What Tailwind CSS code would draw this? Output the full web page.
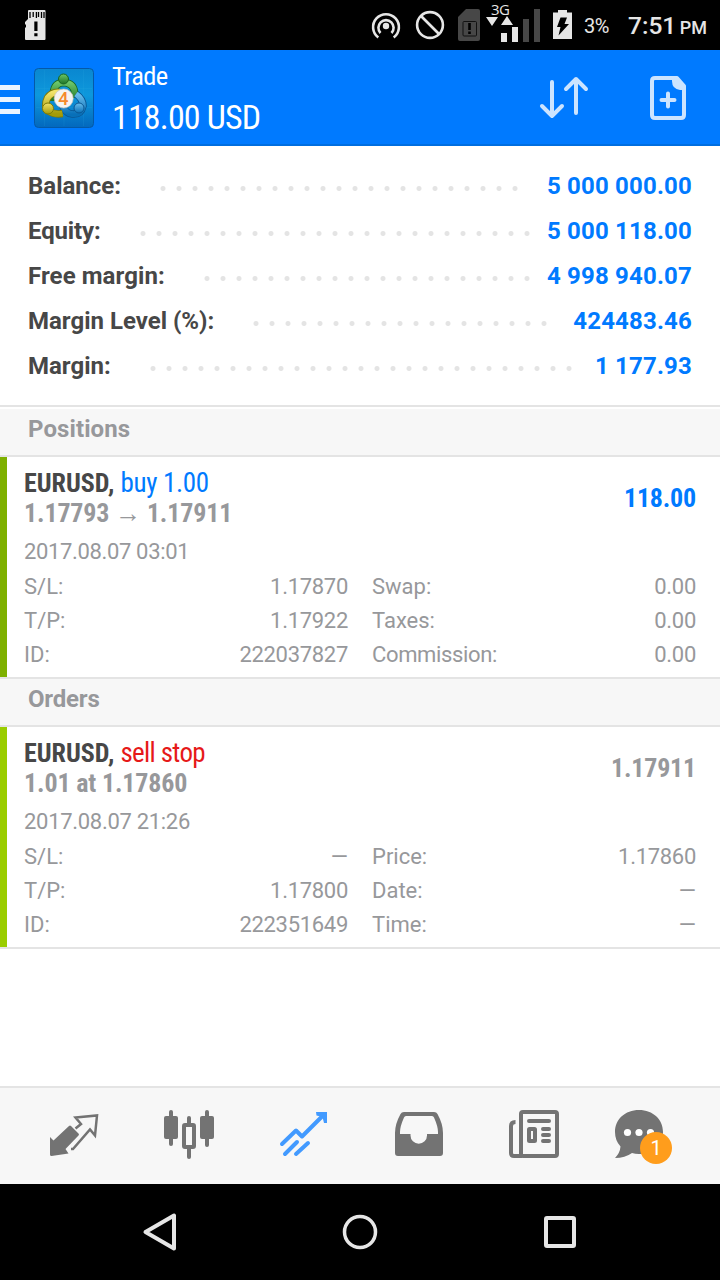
<!DOCTYPE html>
<html lang="en">
<head>
<meta charset="utf-8">
<title>Trade</title>
<script src="https://cdn.jsdelivr.net/npm/@tailwindcss/browser@4"></script>
</head>
<body class="w-[720px] h-[1280px] flex flex-col bg-white font-['Roboto',sans-serif] overflow-hidden">

<!-- Status bar -->
<header class="h-[50px] shrink-0 bg-black flex items-center text-[#e6e6e6] whitespace-nowrap">
  <svg class="w-[60px] h-[50px]" viewBox="0 0 60 50"><path fill="#e6e6e6" d="M29 10h15.500q1 0 1 1v28q0 1-1 1H26q-1 0-1-1V28l1-1v-2l-1-1v-2l3-3v-8q0-1 1-1z"/><path stroke="#000" stroke-width="1.300" d="M30 12v6M33.200 12v5M36.400 12v6M38.500 12v5M41.500 12v6M44 12v6"/><path fill="#000" d="M34.300 21.500h3.200v9.500h-3.200zM34.300 33.300h3.200v3h-3.200z"/></svg>
  <div class="flex-1"></div>
  <svg class="w-[220px] h-[50px]" viewBox="364 0 220 50">
    <g fill="none" stroke="#e6e6e6" stroke-width="2.600"><path d="M378.300 37.500A12.900 12.900 0 1 1 393.700 37.500"/><path d="M380.500 33A7.600 7.600 0 1 1 391.500 33"/><circle cx="430" cy="25" r="12.900"/><path d="M421 16l18 18"/></g>
    <circle cx="386" cy="26" r="3.200" fill="#e6e6e6"/>
    <path fill="#474747" d="M466 9h12q2 0 2 2v28q0 2-2 2h-18q-2 0-2-2V17z"/>
    <rect x="463" y="21.500" width="13.500" height="14.500" rx="1" fill="none" stroke="#111"/><path fill="#000" d="M468.200 23h2.600v7h-2.600zM468.200 31.500h2.600v2.500h-2.600z"/>
    <text x="491" y="14.500" font-size="15" textLength="19" fill="#e6e6e6" font-weight="500" font-family="Open Sans">3G</text>
    <path fill="#e6e6e6" d="M486 17h12l-6 9zM501 25h12l-6-9zM501 33h6v9h-6zM512 27h6v15h-6z"/>
    <path fill="#474747" d="M523 19h6v23h-6zM534 9h6v33h-6z"/>
    <path fill="#e6e6e6" d="M558 10h9v2.500h5v26.500h-19V12.500h5z"/><path fill="#000" d="M560.500 17.500h6.500l-2.500 6.500H569L558.500 35.500l2-8.500H557z"/>
  </svg>
  <span class="w-[44px] text-[20px] leading-[50px] pt-[2px] tracking-[-0.400px]">3%</span>
  <span class="w-[92px] text-[24.500px] leading-[50px] pt-[3px] font-medium">7:51 <span class="text-[18px] -ml-[2.500px] tracking-[-0.100px]">PM</span></span>
</header>

<!-- App bar -->
<div class="h-[96px] shrink-0 bg-[#007aff] border-b-2 border-[#006ee0] flex">
  <svg class="w-[112px] h-[96px]" viewBox="0 50 112 96">
    <defs>
      <linearGradient id="tile" x2="0" y2="1"><stop offset="0" stop-color="#0a87d0"/><stop offset=".45" stop-color="#0d98dc"/><stop offset="1" stop-color="#0368bd"/></linearGradient>
      <linearGradient id="gr" x2="0" y2="1"><stop stop-color="#6cc66a"/><stop offset="1" stop-color="#1d7425"/></linearGradient>
      <linearGradient id="ye" x2="0" y2="1"><stop stop-color="#f1e36a"/><stop offset="1" stop-color="#a49b08"/></linearGradient>
      <linearGradient id="bl" x2="0" y2="1"><stop stop-color="#69bdec"/><stop offset="1" stop-color="#0870b8"/></linearGradient>
    </defs>
    <path fill="#ebf4ff" d="M0 85h20v5H0zM0 97h20v5H0zM0 109h20v5H0z"/>
    <rect x="34.500" y="68.500" width="59" height="59" rx="4" fill="url(#tile)" stroke="#0459a8"/>
    <path stroke="#3ab3ea" stroke-opacity=".12" d="M44.500 70v56M83.500 70v56M36 88.500h56M36 107.500h56M64 70v56"/>
    <g fill="none">
      <path d="M53.500 101V92q1-9 10-9.500 10 .5 11 9.500v6" stroke="#17661f" stroke-width="7.500"/><path d="M53.500 101V92q1-9 10-9.500 10 .5 11 9.500v6" stroke="url(#gr)" stroke-width="5.800"/>
      <path d="M76 94q7 5 7 12-2 9-11 8-6 0-10-9" stroke="#0a5693" stroke-width="7.500"/><path d="M76 94q7 5 7 12-2 9-11 8-6 0-10-9" stroke="url(#bl)" stroke-width="5.800"/>
      <path d="M60 92.500q-8-1-12.500 5.500-4 8 1 13 6 4 14 2.500" stroke="#7e7a08" stroke-width="7.500"/><path d="M60 92.500q-8-1-12.500 5.500-4 8 1 13 6 4 14 2.500" stroke="url(#ye)" stroke-width="5.800"/>
    </g>
    <circle cx="63.500" cy="79" r="5" fill="url(#gr)" stroke="#17661f"/><circle cx="48" cy="108.500" r="5.500" fill="url(#ye)" stroke="#7e7a08"/><circle cx="79" cy="108" r="5" fill="url(#bl)" stroke="#0a5693"/>
    <circle cx="63.700" cy="98.500" r="9.500" fill="#f5f3f1" stroke="#c9c5bd" stroke-width=".7"/>
    <text x="63.300" y="105" text-anchor="middle" font-size="18" font-weight="500" font-family="Roboto" fill="#f58a2c">4</text>
  </svg>
  <div class="flex-1 text-white font-['Roboto_Condensed','Roboto',sans-serif] font-stretch-condensed">
    <div class="pt-[10px] h-[44px] text-[26.500px] leading-[32px] tracking-[-0.600px]">Trade</div>
    <div class="text-[34px] leading-[46px] tracking-[-0.850px]">118.00 USD</div>
  </div>
  <svg class="w-[200px] h-[96px]" viewBox="520 50 200 96" fill="none" stroke="#cce4ff" stroke-width="4" stroke-linecap="round" stroke-linejoin="round">
    <path d="M552 82v34M542 106l10 10 10-10M576 113V79M566 89l10-10 10 10"/>
    <path d="M655 78h22l7 8v29q0 3-3 3h-26q-3 0-3-3V81q0-3 3-3z"/><path fill="#cce4ff" stroke="none" d="M672 78h5l8 8v4h-5q-8-1-8-9z"/><path d="M661.500 100h13M668 93.500v13"/>
  </svg>
</div>

<!-- Account summary -->
<section class="h-[261px] shrink-0 pt-[18px] border-b-2 border-[#e4e4e4] text-[24px] font-bold leading-[45px] text-[#474747] whitespace-nowrap">
  <div class="flex h-[45px] pl-[28px] pr-[28px]"><span class="w-[126.500px]">Balance:</span><i class="w-[368px] h-[45px] mt-[2px] bg-[radial-gradient(circle,#e4e4e4_2px,transparent_3px)] bg-[size:16px_45px]"></i><span class="ml-auto tracking-[0.180px] text-[#007aff]">5 000 000.00</span></div>
  <div class="flex h-[45px] pl-[28px] pr-[28px]"><span class="w-[106.500px] tracking-[-0.150px]">Equity:</span><i class="w-[400px] h-[45px] mt-[2px] bg-[radial-gradient(circle,#e4e4e4_2px,transparent_3px)] bg-[size:16px_45px]"></i><span class="ml-auto tracking-[0.180px] text-[#007aff]">5 000 118.00</span></div>
  <div class="flex h-[45px] pl-[28px] pr-[28px]"><span class="w-[170.500px] tracking-[0.080px]">Free margin:</span><i class="w-[336px] h-[45px] mt-[2px] bg-[radial-gradient(circle,#e4e4e4_2px,transparent_3px)] bg-[size:16px_45px]"></i><span class="ml-auto tracking-[0.180px] text-[#007aff]">4 998 940.07</span></div>
  <div class="flex h-[45px] pl-[28px] pr-[28px]"><span class="w-[219.500px]">Margin Level (%):</span><i class="w-[304px] h-[45px] mt-[2px] bg-[radial-gradient(circle,#e4e4e4_2px,transparent_3px)] bg-[size:16px_45px]"></i><span class="ml-auto tracking-[0.180px] text-[#007aff]">424483.46</span></div>
  <div class="flex h-[45px] pl-[28px] pr-[28px]"><span class="w-[116.500px]">Margin:</span><i class="w-[432px] h-[45px] mt-[2px] bg-[radial-gradient(circle,#e4e4e4_2px,transparent_3px)] bg-[size:16px_45px]"></i><span class="ml-auto tracking-[0.180px] text-[#007aff]">1 177.93</span></div>
</section>

<!-- Positions -->
<h2 class="mt-[2px] h-[48px] shrink-0 bg-[#f7f7f7] border-b-2 border-[#e4e4e4] pl-[28px] text-[24px] leading-[40px] font-bold tracking-[0.100px] text-[#97989b]">Positions</h2>
<article class="h-[222px] shrink-0 border-b-2 border-[#e4e4e4] flex text-[#97989b] whitespace-nowrap">
  <div class="w-[7px] bg-[#7eb000]"></div>
  <div class="flex-1 pt-[11px] pl-[17px] pr-[24px]">
    <div class="flex justify-between items-center font-['Roboto_Condensed','Roboto',sans-serif] font-stretch-condensed font-bold text-[26px] leading-[30px]">
      <div><div><span class="text-[#474747]">EURUSD,</span> <span class="font-normal text-[#007aff] text-[27px] tracking-[-0.300px]">buy 1.00</span></div><div class="tracking-[-0.150px]">1.17793 → 1.17911</div></div>
      <div class="text-[#007aff] tracking-[-0.200px]">118.00</div>
    </div>
    <div class="mt-[7px] mb-[1px] text-[22px] leading-[34px] tracking-[-0.350px]">2017.08.07 03:01</div>
    <div class="grid grid-cols-2 gap-x-[24px] text-[22px] leading-[34px]">
      <div class="flex justify-between"><span>S/L:</span><span class="tracking-[-0.300px]">1.17870</span></div><div class="flex justify-between"><span>Swap:</span><span class="tracking-[-0.300px]">0.00</span></div>
      <div class="flex justify-between"><span>T/P:</span><span class="tracking-[-0.300px]">1.17922</span></div><div class="flex justify-between"><span>Taxes:</span><span class="tracking-[-0.300px]">0.00</span></div>
      <div class="flex justify-between"><span>ID:</span><span class="tracking-[-0.300px]">222037827</span></div><div class="flex justify-between"><span class="tracking-[-0.350px]">Commission:</span><span class="tracking-[-0.300px]">0.00</span></div>
    </div>
  </div>
</article>

<!-- Orders -->
<h2 class="h-[48px] shrink-0 bg-[#f7f7f7] border-b-2 border-[#e4e4e4] pl-[28px] text-[24px] leading-[40px] font-bold tracking-[-0.200px] text-[#97989b]">Orders</h2>
<article class="h-[222px] shrink-0 border-b-2 border-[#e4e4e4] flex text-[#97989b] whitespace-nowrap">
  <div class="w-[7px] bg-[#9acd00]"></div>
  <div class="flex-1 pt-[11px] pl-[17px] pr-[24px]">
    <div class="flex justify-between items-center font-['Roboto_Condensed','Roboto',sans-serif] font-stretch-condensed font-bold text-[26px] leading-[30px]">
      <div><div><span class="text-[#474747]">EURUSD,</span> <span class="font-normal text-[#e61919] text-[27px] tracking-[-0.650px]">sell stop</span></div><div class="tracking-[-0.150px]">1.01 at 1.17860</div></div>
      <div class="tracking-[-0.200px]">1.17911</div>
    </div>
    <div class="mt-[7px] mb-[1px] text-[22px] leading-[34px] tracking-[-0.300px]">2017.08.07 21:26</div>
    <div class="grid grid-cols-2 gap-x-[24px] text-[22px] leading-[34px]">
      <div class="flex justify-between"><span>S/L:</span><span>—</span></div><div class="flex justify-between"><span>Price:</span><span class="tracking-[-0.300px]">1.17860</span></div>
      <div class="flex justify-between"><span>T/P:</span><span class="tracking-[-0.300px]">1.17800</span></div><div class="flex justify-between"><span>Date:</span><span>—</span></div>
      <div class="flex justify-between"><span>ID:</span><span class="tracking-[-0.300px]">222351649</span></div><div class="flex justify-between"><span>Time:</span><span>—</span></div>
    </div>
  </div>
</article>
<div class="flex-1"></div>

<!-- Tab bar -->
<nav class="h-[98px] shrink-0 bg-[#f7f7f7] border-t-2 border-[#e4e4e4] flex pl-[16px]">
  <svg class="w-[115px] h-[96px]" viewBox="16 1088 115 96">
    <path fill="#737373" d="M50 1137l3.500 3.500L69 1126q1-1 2 0l7.500 7.500q1 1 0 2L65.500 1149l3 4.500-17 2.500q-1.500 0-1.500-1.500z"/>
    <path fill="none" stroke="#737373" stroke-width="2.500" stroke-linejoin="miter" d="M75.500 1128.500l5.500-4.500-5.500-6.500 21.500-2-2 20-5-6-17 19.500h-2"/>
  </svg>
  <svg class="w-[115px] h-[96px]" viewBox="131 1088 115 96"><g fill="#737373"><rect x="164" y="1116" width="14" height="23" rx="2"/><rect x="169" y="1110" width="4" height="36" rx="2"/><rect x="200" y="1116" width="14" height="23" rx="2"/><rect x="205" y="1110" width="4" height="37" rx="2"/><rect x="187" y="1116" width="4" height="9" rx="2"/><rect x="187" y="1145" width="4" height="14" rx="2"/></g><rect x="184" y="1125" width="10" height="22" rx="1" fill="none" stroke="#737373" stroke-width="4"/></svg>
  <svg class="w-[115px] h-[96px]" viewBox="246 1088 115 96" fill="none" stroke="#429aff" stroke-width="4" stroke-linecap="round" stroke-linejoin="round"><path d="M282 1144l14-13.500 6 6 22-22M285 1154l12-12M296 1154l12-11"/><path d="M316 1112h11v11h-3l-1.500-6-6-1.500z" fill="#429aff" stroke="none"/></svg>
  <svg class="w-[115px] h-[96px]" viewBox="361 1088 115 96"><path fill="#737373" fill-rule="evenodd" d="M404 1112h30q2.500 0 3.500 2 5.500 10 5.500 19v20q0 3-3 3h-42q-3 0-3-3v-20q0-9 5.500-19 1-2 3.500-2zM406 1116q-1.500 0-2 1.500-4 9-4 14.500v2h10.500v1.500a8.200 8.200 0 0 0 16.500 0v-1.500h11v-2q0-5.500-4-14.500-.5-1.500-2-1.500z"/></svg>
  <svg class="w-[115px] h-[96px]" viewBox="476 1088 115 96" fill="none" stroke="#737373" stroke-width="4"><rect x="521" y="1112" width="36" height="44" rx="2"/><path d="M515.500 1122q-4.500 0-4.500 4v27q0 3 3 3h8"/><path stroke-linecap="round" d="M529 1121h20M543 1129h6M543 1135h6M543 1141h6"/><rect x="529" y="1129" width="6" height="12" rx=".5"/></svg>
  <div class="relative w-[115px] h-[96px]">
    <svg class="w-[115px] h-[96px]" viewBox="591 1088 115 96"><path fill="#737373" d="M639 1110c14 0 24 9.500 24 22s-10 22-24 22q-4 0-7-1-7 5-17 5 5-5 5.500-11.500-5.500-6-5.500-14.500c0-12.500 10-22 24-22z"/><g fill="#fff"><circle cx="627.500" cy="1132.500" r="3.600"/><circle cx="639" cy="1132.500" r="3.600"/><circle cx="650.500" cy="1132.500" r="3.600"/></g></svg>
    <span class="absolute left-[49px] top-[44px] w-8 h-8 rounded-full bg-[#ff9d1c] text-white text-[20px] leading-[32px] text-center">1</span>
  </div>
</nav>

<!-- System navigation -->
<footer class="h-[96px] shrink-0 bg-black flex justify-center">
  <svg class="w-[200px] h-[96px]" viewBox="60 1184 200 96"><path fill="none" stroke="#e6e6e6" stroke-width="4" stroke-linejoin="round" d="M174 1215.500v33l-28.500-16.500z"/></svg>
  <svg class="w-[200px] h-[96px]" viewBox="260 1184 200 96"><circle cx="360" cy="1232" r="15.500" fill="none" stroke="#e6e6e6" stroke-width="3.500"/></svg>
  <svg class="w-[200px] h-[96px]" viewBox="460 1184 200 96"><rect x="546" y="1218" width="28" height="28" rx="1" fill="none" stroke="#e6e6e6" stroke-width="4"/></svg>
</footer>
</body>
</html>
